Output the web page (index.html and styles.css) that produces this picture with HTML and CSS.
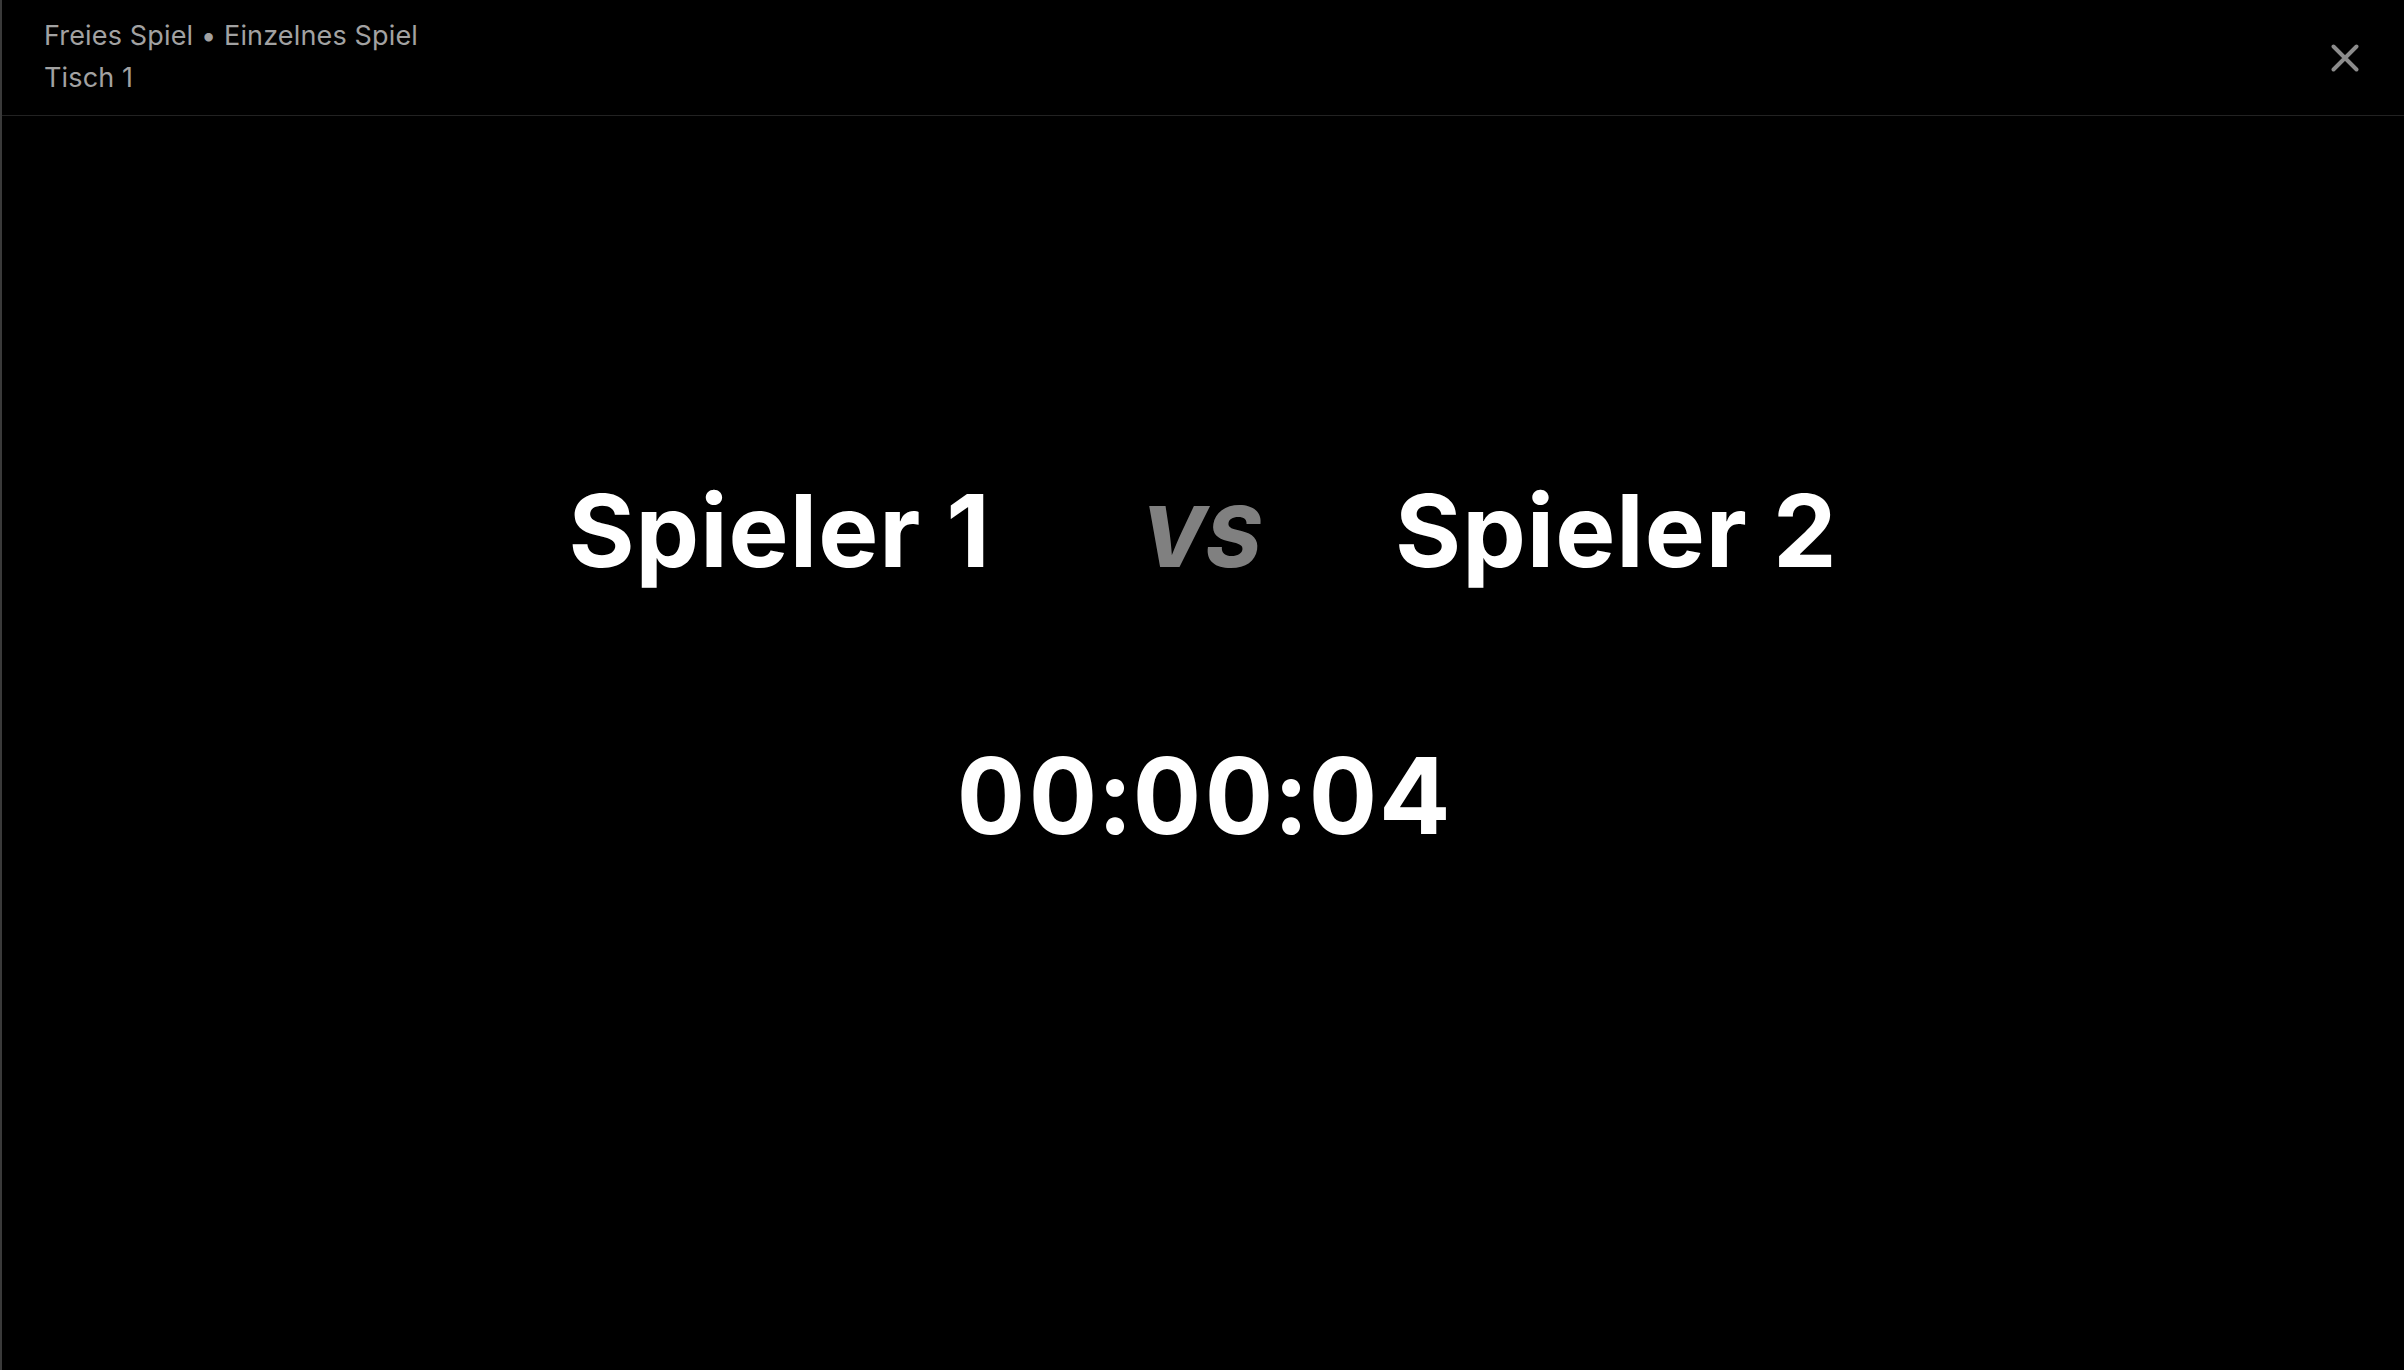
FILE: index.html
```html
<!DOCTYPE html>
<html lang="de">
<head>
<meta charset="utf-8">
<title>Tisch 1</title>
<link rel="stylesheet" href="styles.css">
</head>
<body>
<div class="screen">
  <header class="topbar">
    <div class="meta">
      <div class="meta-line">Freies Spiel • Einzelnes Spiel</div>
      <div class="meta-line">Tisch 1</div>
    </div>
    <button class="close" aria-label="Schließen">
      <svg viewBox="0 0 28 28" width="28" height="28" aria-hidden="true">
        <path d="M2.5 2.5 L25.5 25.5 M25.5 2.5 L2.5 25.5" fill="none" stroke="currentColor" stroke-width="3.9" stroke-linecap="round"/>
      </svg>
    </button>
  </header>
  <main class="stage">
    <div class="matchup">
      <div class="player">Spieler 1</div>
      <div class="versus">VS</div>
      <div class="player">Spieler 2</div>
    </div>
    <div class="timer">00:00:04</div>
  </main>
</div>
</body>
</html>
```

FILE: styles.css
```css
html, body {
  margin: 0;
  padding: 0;
  background: #000;
  height: 100%;
}

body {
  font-family: "Inter", "Noto Sans", sans-serif;
  color: #fff;
}

.screen {
  height: 100vh;
  box-sizing: border-box;
  border-left: 2px solid #3a3a3a;
  display: flex;
  flex-direction: column;
}

.topbar {
  height: 116px;
  box-sizing: border-box;
  border-bottom: 1px solid #222;
  padding: 0 44px 0 42px;
  display: flex;
  align-items: center;
  justify-content: space-between;
}

.meta {
  display: flex;
  flex-direction: column;
  padding-bottom: 2px;
}

.meta-line {
  font-size: 27px;
  line-height: 42px;
  color: #a2a2a2;
  letter-spacing: 0.15px;
}

.close {
  background: none;
  border: 0;
  padding: 0;
  margin: 0;
  color: #8c8c8c;
  width: 30px;
  height: 30px;
  display: flex;
  align-items: center;
  justify-content: center;
  cursor: pointer;
}

.stage {
  flex: 1;
  display: flex;
  flex-direction: column;
  align-items: center;
  padding-top: 354px;
}

.matchup {
  display: flex;
  align-items: baseline;
  justify-content: center;
}

.player {
  font-size: 101px;
  font-weight: 700;
  line-height: 120px;
  letter-spacing: 1px;
}

.versus {
  font-size: 84px;
  font-weight: 800;
  font-style: italic;
  line-height: 120px;
  color: #808080;
  margin: 0 134px 0 150px;
}

.timer {
  margin-top: 132px;
  font-size: 106px;
  font-weight: 700;
  line-height: 134px;
  font-variant-numeric: tabular-nums;
  letter-spacing: 3.5px;
  padding-left: 3.5px;
}
```
